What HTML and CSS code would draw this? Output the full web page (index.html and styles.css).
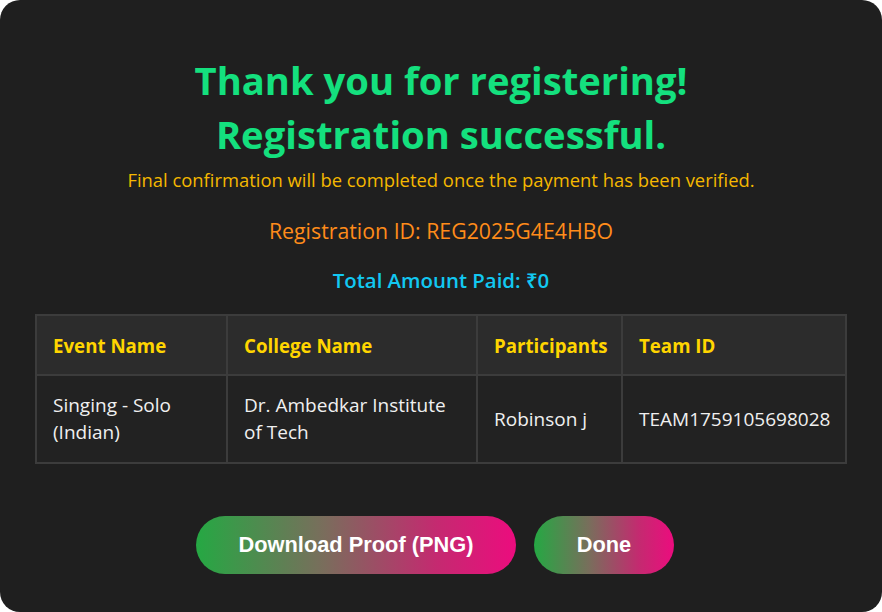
FILE: index.html
```html
<!DOCTYPE html>
<html>
<head>
<meta charset="utf-8">
<link rel="stylesheet" href="styles.css">
</head>
<body>
<div class="card">
  <h1 class="title">Thank you for registering!<br>Registration successful.</h1>
  <p class="note">Final confirmation will be completed once the payment has been verified.</p>
  <p class="reg-id">Registration ID: REG2025G4E4HBO</p>
  <p class="amount">Total Amount Paid: ₹0</p>
  <table class="details">
    <colgroup>
      <col class="c1"><col class="c2"><col class="c3"><col class="c4">
    </colgroup>
    <thead>
      <tr><th>Event Name</th><th>College Name</th><th>Participants</th><th>Team ID</th></tr>
    </thead>
    <tbody>
      <tr><td>Singing - Solo (Indian)</td><td>Dr. Ambedkar Institute of Tech</td><td>Robinson j</td><td>TEAM1759105698028</td></tr>
    </tbody>
  </table>
  <div class="actions">
    <button class="btn btn-wide">Download Proof (PNG)</button>
    <button class="btn btn-small">Done</button>
  </div>
</div>
</body>
</html>
```
FILE: styles.css
```css
html, body {
  margin: 0;
  padding: 0;
  background: #ffffff;
}
.card {
  width: 882px;
  height: 612px;
  box-sizing: border-box;
  background: #1f1f1f;
  border-radius: 20px;
  padding: 53px 35px 0;
  font-family: "Open Sans", "Noto Sans", sans-serif;
  text-align: center;
}
.title {
  margin: 0;
  font-size: 38.2px;
  line-height: 54px;
  font-weight: 700;
  color: #14e07e;
}
.note {
  margin: 7px 0 0;
  font-size: 18.4px;
  line-height: 24px;
  color: #f5b800;
}
.reg-id {
  margin: 26px 0 0;
  font-size: 21.3px;
  line-height: 26px;
  font-weight: 500;
  color: #ff8c1a;
}
.amount {
  margin: 23px 0 0;
  font-size: 20.4px;
  line-height: 26px;
  font-weight: 600;
  color: #12c8f2;
}
.details {
  margin-top: 21px;
  width: 810px;
  border-collapse: collapse;
  table-layout: fixed;
  text-align: left;
  font-size: 19px;
}
.c1 { width: 191px; }
.c2 { width: 250px; }
.c3 { width: 145px; }
.c4 { width: 224px; }
.details th, .details td {
  border: 2px solid #3c3c3c;
  padding: 0 16px;
}
.details th {
  height: 58px;
  background: #2c2c2c;
  color: #ffd500;
  font-weight: 700;
  font-size: 18.7px;
}
.details td {
  height: 86px;
  background: #222222;
  color: #f0f0f0;
  line-height: 27px;
}
.actions {
  margin-top: 52px;
  padding-right: 12px;
  display: flex;
  justify-content: center;
  gap: 18px;
}
.btn {
  height: 58px;
  border: none;
  border-radius: 29px;
  background: linear-gradient(90deg, #25a843 0%, #7a6d5c 40%, #c42a70 75%, #ec0c7e 100%);
  color: #ffffff;
  font-family: "Liberation Sans", Arial, sans-serif;
  font-weight: 700;
  font-size: 21.8px;
}
.btn-wide { width: 320px; }
.btn-small { width: 140px; }
```
